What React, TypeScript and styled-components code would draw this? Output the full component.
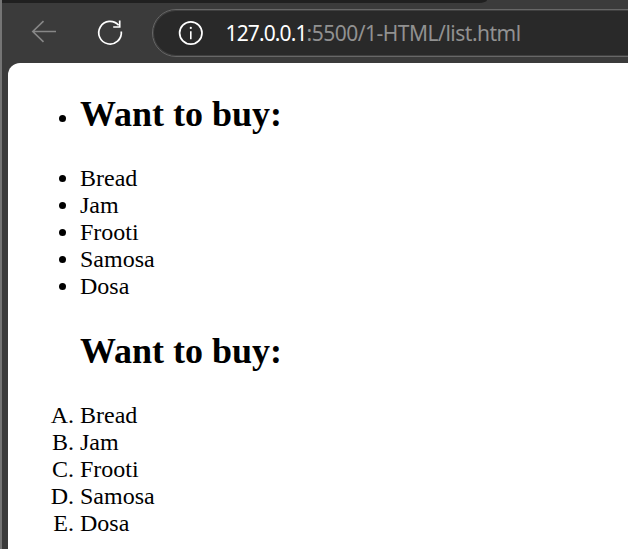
import React from "react";
import styled, { createGlobalStyle } from "styled-components";

const GlobalStyle = createGlobalStyle`
  *, *::before, *::after { box-sizing: border-box; }
  body { margin: 0; background: #3b3b3b; overflow: hidden; }
`;

const Window = styled.div`
  display: flex;
  flex-direction: column;
  height: 549px;
  overflow: hidden;
  background: #3b3b3b;
  border-left: 2px solid #757575;
`;

const TabStrip = styled.div`
  flex: none;
  width: 485px;
  height: 3px;
  background: #202020;
  border-bottom-right-radius: 8px 3px;
`;

const Toolbar = styled.div`
  flex: none;
  display: flex;
  align-items: flex-start;
  height: 60px;
  padding: 6px 0 0 26px;
`;

const IconButton = styled.button<{ $gap: number; $color: string }>`
  display: flex;
  flex: none;
  width: 30px;
  height: 48px;
  margin: 0 ${(p) => p.$gap}px 0 0;
  padding: 0;
  align-items: center;
  justify-content: center;
  border: 0;
  background: none;
  color: ${(p) => p.$color};
`;

const AddressBar = styled.div`
  display: flex;
  flex: 1;
  align-items: center;
  height: 48px;
  margin-right: -30px;
  padding-left: 25px;
  border: 1px solid #676767;
  border-radius: 24px;
  background: #292929;
  box-shadow: inset 0 0 0 1px #404040;
  white-space: nowrap;
`;

const Url = styled.div`
  margin: 0 0 1px 21.5px;
  font: 21px/28px "Noto Sans", "Open Sans", sans-serif;
`;

const Host = styled.span`
  color: #ffffff;
  letter-spacing: -0.88px;
`;

const Path = styled.span`
  color: #919191;
  letter-spacing: -0.5px;
`;

const Page = styled.main`
  flex: 1;
  margin-left: 6px;
  padding-top: 31px;
  background: #ffffff;
  border-top-left-radius: 12px;
  color: #000000;
  font: 24px/27px "Liberation Serif", "Times New Roman", serif;
`;

const BulletList = styled.ul`
  margin: 0;
  padding: 0 0 0 72px;
  list-style: disc;
`;

const LetterList = styled.ol`
  margin: 0;
  padding: 0 0 0 72px;
  list-style: upper-alpha;
`;

const Heading = styled.h2`
  margin: 0 0 30px;
  font-size: 36px;
  line-height: 41px;
`;

const SecondHeading = styled(Heading)`
  margin-top: 31px;
  padding-left: 72px;
`;

const items = ["Bread", "Jam", "Frooti", "Samosa", "Dosa"];

export default function App() {
  return (
    <>
      <GlobalStyle />
      <Window>
        <TabStrip />
        <Toolbar>
          <IconButton $gap={36} $color="#878787" aria-label="Back">
            <svg width="30" height="30" viewBox="0 0 30 30" fill="none" stroke="currentColor" strokeWidth="1.6">
              <path d="M28 13.5H4.5M15.5 3.2L4.8 13.5l10.7 10.3" />
            </svg>
          </IconButton>
          <IconButton $gap={28} $color="#ffffff" aria-label="Reload">
            <svg width="30" height="30" viewBox="0 0 30 30" fill="none" stroke="currentColor" strokeWidth="1.7">
              <path d="M27.3 13.5A11.3 11.3 0 1 1 24.6 7.3M25.7 2.5V9H19.2" />
            </svg>
          </IconButton>
          <AddressBar>
            <svg width="26" height="26" viewBox="0 0 26 26" fill="none" stroke="#ffffff">
              <circle cx="12.8" cy="13" r="11.2" strokeWidth="1.7" />
              <path d="M12.8 11.3v7.9" strokeWidth="1.6" />
              <circle cx="12.8" cy="7.9" r="1.1" fill="#ffffff" stroke="none" />
            </svg>
            <Url>
              <Host>127.0.0.1</Host>
              <Path>:5500/1-HTML/list.html</Path>
            </Url>
          </AddressBar>
        </Toolbar>
        <Page>
          <BulletList>
            <li>
              <Heading>Want to buy:</Heading>
            </li>
            {items.map((item) => (
              <li key={item}>{item}</li>
            ))}
          </BulletList>
          <SecondHeading>Want to buy:</SecondHeading>
          <LetterList>
            {items.map((item) => (
              <li key={item}>{item}</li>
            ))}
          </LetterList>
        </Page>
      </Window>
    </>
  );
}
